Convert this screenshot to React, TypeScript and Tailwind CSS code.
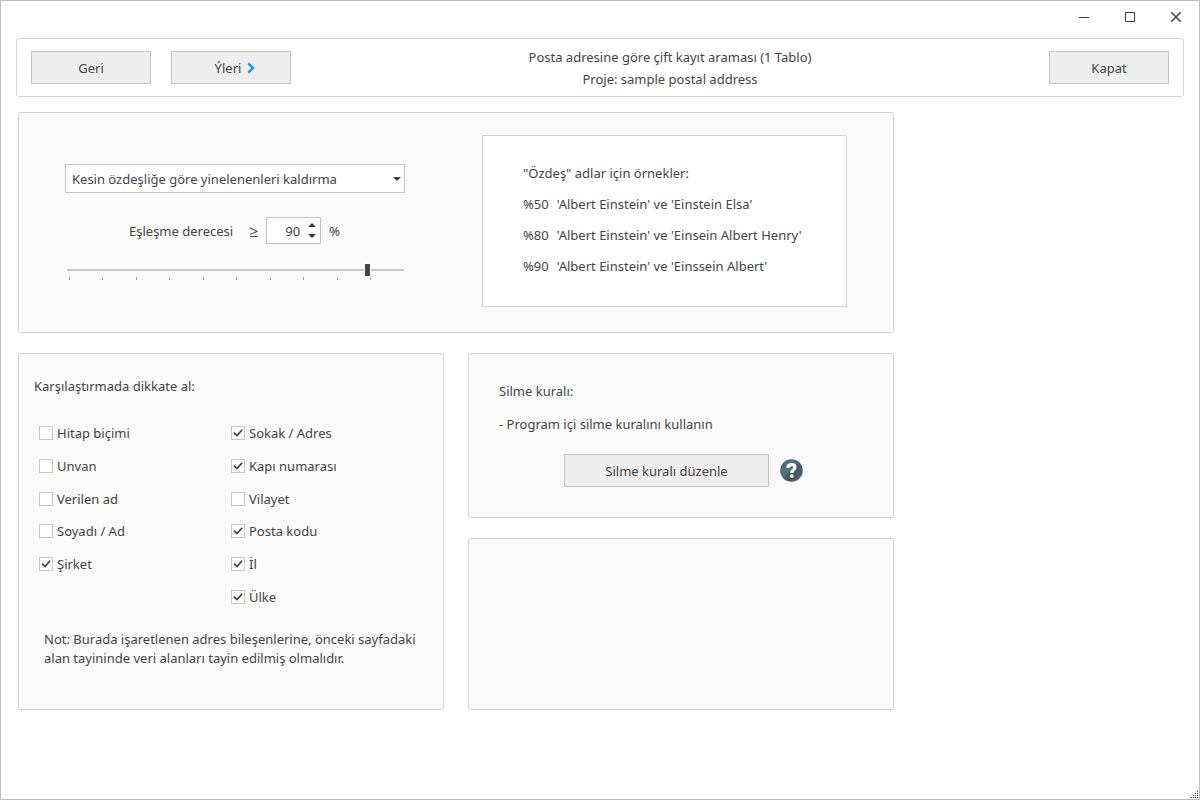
import { useState } from "react";
import type { ReactNode } from "react";

type Field = { id: string; label: string; checked: boolean };

const nameFields: Field[] = [
  { id: "salutation", label: "Hitap biçimi", checked: false },
  { id: "title", label: "Unvan", checked: false },
  { id: "firstname", label: "Verilen ad", checked: false },
  { id: "lastname", label: "Soyadı / Ad", checked: false },
  { id: "company", label: "Şirket", checked: true },
];

const addressFields: Field[] = [
  { id: "street", label: "Sokak / Adres", checked: true },
  { id: "number", label: "Kapı numarası", checked: true },
  { id: "state", label: "Vilayet", checked: false },
  { id: "postcode", label: "Posta kodu", checked: true },
  { id: "city", label: "İl", checked: true },
  { id: "country", label: "Ülke", checked: true },
];

const examples = [
  { degree: "%50", text: "'Albert Einstein' ve 'Einstein Elsa'" },
  { degree: "%80", text: "'Albert Einstein' ve 'Einsein Albert Henry'" },
  { degree: "%90", text: "'Albert Einstein' ve 'Einssein Albert'" },
];

const ticks = [1, 2, 3, 4, 5, 6, 7, 8, 9, 10];

function Panel({ className, children }: { className: string; children?: ReactNode }) {
  return (
    <section className={`rounded-[3px] border border-[#d3d3d3] bg-[#fafafa] ${className}`}>
      {children}
    </section>
  );
}

function PushButton({ className, children }: { className: string; children: ReactNode }) {
  return (
    <button
      type="button"
      className={`flex h-[33px] items-center justify-center gap-1.5 border border-[#c3c3c3] bg-[#eeeeee] ${className}`}
    >
      {children}
    </button>
  );
}

function CheckField({ field }: { field: Field }) {
  const [checked, setChecked] = useState(field.checked);
  return (
    <div className="flex items-center gap-1">
      <span className="grid size-3.5 shrink-0">
        <input
          id={field.id}
          type="checkbox"
          checked={checked}
          onChange={() => setChecked(!checked)}
          className="col-start-1 row-start-1 size-3.5 appearance-none border border-[#c6c6c6] bg-white"
        />
        {checked && (
          <svg viewBox="0 0 14 14" className="pointer-events-none col-start-1 row-start-1 size-3.5" fill="none">
            <path d="M3 6.6 L6 9.6 L11.2 3.8" stroke="#3c3c3c" strokeWidth="1.6" />
          </svg>
        )}
      </span>
      <label htmlFor={field.id}>{field.label}</label>
    </div>
  );
}

function CaptionButton({ label, children }: { label: string; children: ReactNode }) {
  return (
    <button type="button" aria-label={label} className="flex h-8 w-[46px] items-center justify-center">
      <svg viewBox="0 0 10 10" className="size-2.5 overflow-visible" fill="none" stroke="#3c3c3c">
        {children}
      </svg>
    </button>
  );
}

export default function App() {
  const [degree, setDegree] = useState(90);
  const change = (value: number) => setDegree(Math.max(0, Math.min(100, value)));

  return (
    <div className="relative flex min-h-screen flex-col border border-[#bfbfbf] bg-white font-['Noto_Sans','Open_Sans',sans-serif] text-[13px] leading-5 text-[#444444]">
      <header className="flex justify-end">
        <CaptionButton label="Simge durumuna küçült">
          <path d="M0 5.5 H10" />
        </CaptionButton>
        <CaptionButton label="Ekranı kapla">
          <path d="M0.5 0.5 H9.5 V9.5 H0.5 Z" />
        </CaptionButton>
        <CaptionButton label="Pencereyi kapat">
          <path d="M0.3 0.3 L9.7 9.7 M9.7 0.3 L0.3 9.7" strokeWidth="1.4" />
        </CaptionButton>
      </header>

      <nav className="mx-[15px] mt-[5px] flex min-h-[59px] items-center rounded-[3px] border border-[#d3d3d3] px-3.5">
        <div className="flex gap-5">
          <PushButton className="w-[120px]">Geri</PushButton>
          <PushButton className="w-[120px] pl-2">
            Ýleri
            <svg viewBox="0 0 8 12" className="h-3 w-2" fill="none">
              <path d="M1.2 1.4 L6 6 L1.2 10.6" stroke="#0f96ee" strokeWidth="2.4" />
            </svg>
          </PushButton>
        </div>
        <div className="flex-1 text-center leading-[22px]">
          <h1>Posta adresine göre çift kayıt araması (1 Tablo)</h1>
          <p>Proje: sample postal address</p>
        </div>
        <PushButton className="w-[120px]">Kapat</PushButton>
      </nav>

      <main className="mx-[17px] mt-[15px] flex max-w-[876px] flex-col gap-5">
        <Panel className="flex justify-between pt-[22px] pr-[46px] pb-[25px] pl-[46px]">
          <div className="flex w-[340px] flex-col pt-[29px]">
            <div className="grid items-center">
              <select
                aria-label="Yineleme yöntemi"
                className="col-start-1 row-start-1 h-[29px] w-full appearance-none border border-[#c6c6c6] bg-white pl-1.5"
              >
                <option>Kesin özdeşliğe göre yinelenenleri kaldırma</option>
              </select>
              <svg
                viewBox="0 0 8 4"
                className="pointer-events-none col-start-1 row-start-1 mr-1 h-1 w-2 justify-self-end"
                fill="#3c3c3c"
              >
                <path d="M0 0 H8 L4 4 Z" />
              </svg>
            </div>

            <div className="mt-6 flex items-center pl-16">
              <label htmlFor="degree" className="whitespace-nowrap">
                Eşleşme derecesi
              </label>
              <span className="w-[33px] pr-2 text-right text-base">≥</span>
              <div className="flex h-[27px] w-[55px] border border-[#c3c3c3] bg-white">
                <input
                  id="degree"
                  type="text"
                  inputMode="numeric"
                  value={degree}
                  onChange={(e) => change(Number(e.target.value) || 0)}
                  className="w-8 min-w-0 flex-1 bg-transparent text-right outline-none"
                />
                <div className="flex w-5 flex-col items-center justify-center gap-[7px] pl-1">
                  <button type="button" aria-label="Artır" onClick={() => change(degree + 1)}>
                    <svg viewBox="0 0 8 4" className="block h-1 w-2" fill="#3c3c3c">
                      <path d="M0 4 H8 L4 0 Z" />
                    </svg>
                  </button>
                  <button type="button" aria-label="Azalt" onClick={() => change(degree - 1)}>
                    <svg viewBox="0 0 8 4" className="block h-1 w-2" fill="#3c3c3c">
                      <path d="M0 0 H8 L4 4 Z" />
                    </svg>
                  </button>
                </div>
              </div>
              <span className="pl-2">%</span>
            </div>

            <input
              type="range"
              aria-label="Eşleşme derecesi"
              min={0}
              max={100}
              value={degree}
              onChange={(e) => change(Number(e.target.value))}
              className="mt-[19px] ml-0.5 block h-3.5 w-[337px] appearance-none bg-transparent [&::-webkit-slider-runnable-track]:h-0.5 [&::-webkit-slider-runnable-track]:bg-[#c6c6c6] [&::-webkit-slider-thumb]:mt-[-6px] [&::-webkit-slider-thumb]:h-3.5 [&::-webkit-slider-thumb]:w-[7px] [&::-webkit-slider-thumb]:appearance-none [&::-webkit-slider-thumb]:border [&::-webkit-slider-thumb]:border-white [&::-webkit-slider-thumb]:bg-[#444444]"
            />
            <div className="ml-1 flex w-[302px] justify-between">
              {ticks.map((tick) => (
                <span key={tick} className="h-[3px] w-px bg-[#a0a0a0]" />
              ))}
            </div>
          </div>

          <div className="flex h-[172px] w-[365px] flex-col gap-[11px] border border-[#d3d3d3] bg-white pt-[27px] pl-10">
            <p>"Özdeş" adlar için örnekler:</p>
            {examples.map((example) => (
              <p key={example.degree} className="flex gap-2">
                <span>{example.degree}</span>
                <span>{example.text}</span>
              </p>
            ))}
          </div>
        </Panel>

        <div className="grid grid-cols-2 gap-6">
          <Panel className="pt-[22px] pb-[41px] pl-[15px]">
            <h2>Karşılaştırmada dikkate al:</h2>
            <div className="mt-[21px] flex pl-[5px]">
              <div className="grid h-[196px] w-48 grid-rows-6">
                {nameFields.map((field) => (
                  <CheckField key={field.id} field={field} />
                ))}
              </div>
              <div className="grid h-[196px] grid-rows-6">
                {addressFields.map((field) => (
                  <CheckField key={field.id} field={field} />
                ))}
              </div>
            </div>
            <p className="mt-[17px] pr-5 pl-2.5 leading-[19px]">
              Not: Burada işaretlenen adres bileşenlerine, önceki sayfadaki alan tayininde veri alanları tayin edilmiş
              olmalıdır.
            </p>
          </Panel>

          <div className="flex flex-col gap-5">
            <Panel className="px-[30px] pt-[27px] pb-[30px]">
              <h2>Silme kuralı:</h2>
              <p className="mt-[13px]">- Program içi silme kuralını kullanın</p>
              <div className="mt-5 flex items-center gap-[11px] pl-[65px]">
                <PushButton className="w-[205px]">Silme kuralı düzenle</PushButton>
                <button type="button" aria-label="Yardım">
                  <svg viewBox="0 0 24 24" className="block size-[23px]">
                    <circle cx="12" cy="12" r="11.8" fill="#546e7a" />
                    <path d="M20.3 3.7 A11.8 11.8 0 0 1 3.7 20.3 Z" fill="#455a64" />
                    <path
                      d="M8.2 9.2 C8.3 6.9 9.8 5.9 12 5.9 C14.4 5.9 15.7 7 15.7 8.8 C15.7 11.3 12.3 11.2 12.3 14.6"
                      fill="none"
                      stroke="#ffffff"
                      strokeWidth="3.2"
                    />
                    <circle cx="12.2" cy="17.9" r="1.9" fill="#ffffff" />
                  </svg>
                </button>
              </div>
            </Panel>
            <Panel className="flex-1" />
          </div>
        </div>
      </main>

      <svg viewBox="0 0 8 8" className="absolute right-0 bottom-0 size-2" fill="#3c3c3c">
        <path d="M6 0h1v1h-1z M4 2h1v1h-1z M6 2h1v1h-1z M2 4h1v1h-1z M4 4h1v1h-1z M6 4h1v1h-1z M0 6h1v1h-1z M2 6h1v1h-1z M4 6h1v1h-1z M6 6h1v1h-1z" />
      </svg>
    </div>
  );
}
